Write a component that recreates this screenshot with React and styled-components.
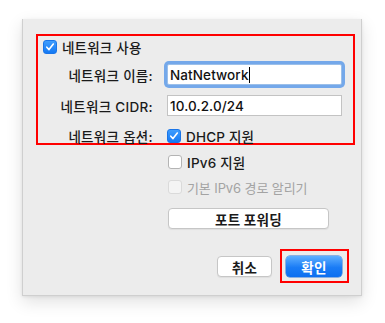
import styled, { createGlobalStyle } from "styled-components";

const GlobalStyle = createGlobalStyle`
  html, body {
    margin: 0;
    padding: 0;
    background: #ffffff;
  }
  body {
    font-family: "Inter", "Noto Sans CJK KR", sans-serif;
    font-size: 13.5px;
    font-weight: 500;
    letter-spacing: 0.3px;
    color: #1a1a1a;
  }
`;

const Page = styled.div`
  width: 385px;
  height: 323px;
  padding: 19px 0 0 22px;
  box-sizing: border-box;
`;

const Sheet = styled.div`
  width: 340px;
  height: 277px;
  box-sizing: border-box;
  background: #ececec;
  border: 1px solid #cfcfcf;
  border-top: none;
  box-shadow: 0 6px 16px rgba(0, 0, 0, 0.12), 0 1px 3px rgba(0, 0, 0, 0.08);
  padding: 15px 0 0 13px;
  display: flex;
  flex-direction: column;
`;

const Highlight = styled.div`
  box-sizing: border-box;
  border: 2px solid #ff0000;
`;

const NetworkBox = styled(Highlight)`
  width: 319px;
  height: 111px;
  padding-top: 2px;
  display: flex;
  flex-direction: column;
`;

const CheckRow = styled.label`
  display: flex;
  align-items: center;
  gap: 5px;
  height: 18px;
  padding-left: ${(p) => p.$indent || 0}px;
  color: ${(p) => (p.$disabled ? "#a3a3a3" : "#1a1a1a")};
  font-weight: ${(p) => (p.$disabled ? 400 : 500)};
  font-size: ${(p) => (p.$disabled ? "13px" : "13.5px")};
  letter-spacing: ${(p) => (p.$disabled ? "-0.1px" : "0.2px")};
  white-space: nowrap;
`;

const Box = styled.span`
  width: 14px;
  height: 14px;
  box-sizing: border-box;
  border-radius: 3px;
  flex: none;
  display: inline-flex;
  align-items: center;
  justify-content: center;
  background: ${(p) =>
    p.$checked
      ? "linear-gradient(#3f9dfd, #1479f4)"
      : p.$disabled
      ? "#f4f4f4"
      : "#ffffff"};
  border: 1px solid
    ${(p) => (p.$checked ? "#1a75e8" : p.$disabled ? "#dadada" : "#b4b4b4")};
`;

const FormGrid = styled.div`
  display: grid;
  grid-template-columns: 115px 175px;
  grid-auto-rows: auto;
  column-gap: 14px;
  row-gap: 10px;
  margin-top: 8px;
  align-items: center;
`;

const Label = styled.span`
  text-align: right;
  white-space: nowrap;
`;

const Field = styled.div`
  height: 21px;
  box-sizing: border-box;
  background: #ffffff;
  border: 1px solid ${(p) => (p.$focused ? "#9bbfe9" : "#c3c3c3")};
  box-shadow: ${(p) => (p.$focused ? "0 0 0 3px #74a8ea" : "none")};
  border-radius: ${(p) => (p.$focused ? "2px" : "0")};
  padding: 0 2px;
  display: flex;
  align-items: center;
  font-size: 13.5px;
  letter-spacing: 0.1px;
  color: #111111;
`;

const Caret = styled.span`
  display: inline-block;
  width: 1px;
  height: 16px;
  background: #000000;
`;

const Options = styled.div`
  display: flex;
  flex-direction: column;
  padding-left: 132px;
  margin-top: 8px;
  gap: 7px;
`;

const PlainButton = styled.button`
  box-sizing: border-box;
  height: 21px;
  width: ${(p) => p.$width}px;
  background: #ffffff;
  border: 1px solid #c6c6c6;
  border-radius: 4px;
  box-shadow: 0 1px 1px rgba(0, 0, 0, 0.06);
  font-family: inherit;
  font-size: 13.5px;
  letter-spacing: 0.3px;
  font-weight: 700;
  color: #1a1a1a;
  padding: 0;
`;

const PortButton = styled(PlainButton)`
  margin-top: 5px;
`;

const Footer = styled.div`
  display: flex;
  justify-content: flex-end;
  align-items: center;
  gap: 8px;
  margin-top: 20px;
  padding-right: 12px;
`;

const OkFrame = styled(Highlight)`
  padding: 5px 5px 4px 4px;
`;

const PrimaryButton = styled.button`
  box-sizing: border-box;
  width: 56px;
  height: 21px;
  border: none;
  border-radius: 4px;
  background: linear-gradient(#5fb0ff, #1a7cf6 55%, #0d6ff0);
  box-shadow: 0 0 0 0.5px #2a74d6;
  font-family: inherit;
  font-size: 13.5px;
  letter-spacing: 0.3px;
  font-weight: 700;
  color: #ffffff;
  padding: 0;
`;

function Check({ checked, disabled }) {
  return (
    <Box $checked={checked} $disabled={disabled}>
      {checked && (
        <svg width="10" height="10" viewBox="0 0 10 10">
          <path
            d="M1.8 5.2 L4 7.6 L8.3 2"
            fill="none"
            stroke="#ffffff"
            strokeWidth="1.6"
            strokeLinecap="round"
            strokeLinejoin="round"
          />
        </svg>
      )}
    </Box>
  );
}

export default function App() {
  return (
    <>
      <GlobalStyle />
      <Page>
        <Sheet>
          <NetworkBox>
            <CheckRow $indent={5}>
              <Check checked />
              네트워크 사용
            </CheckRow>
            <FormGrid>
              <Label>네트워크 이름:</Label>
              <Field $focused>
                NatNetwork
                <Caret />
              </Field>
              <Label>네트워크 CIDR:</Label>
              <Field>10.0.2.0/24</Field>
              <Label>네트워크 옵션:</Label>
              <CheckRow>
                <Check checked />
                DHCP 지원
              </CheckRow>
            </FormGrid>
          </NetworkBox>
          <Options>
            <CheckRow>
              <Check />
              IPv6 지원
            </CheckRow>
            <CheckRow $disabled>
              <Check disabled />
              기본 IPv6 경로 알리기
            </CheckRow>
            <PortButton $width={161}>포트 포워딩</PortButton>
          </Options>
          <Footer>
            <PlainButton $width={55}>취소</PlainButton>
            <OkFrame>
              <PrimaryButton>확인</PrimaryButton>
            </OkFrame>
          </Footer>
        </Sheet>
      </Page>
    </>
  );
}
